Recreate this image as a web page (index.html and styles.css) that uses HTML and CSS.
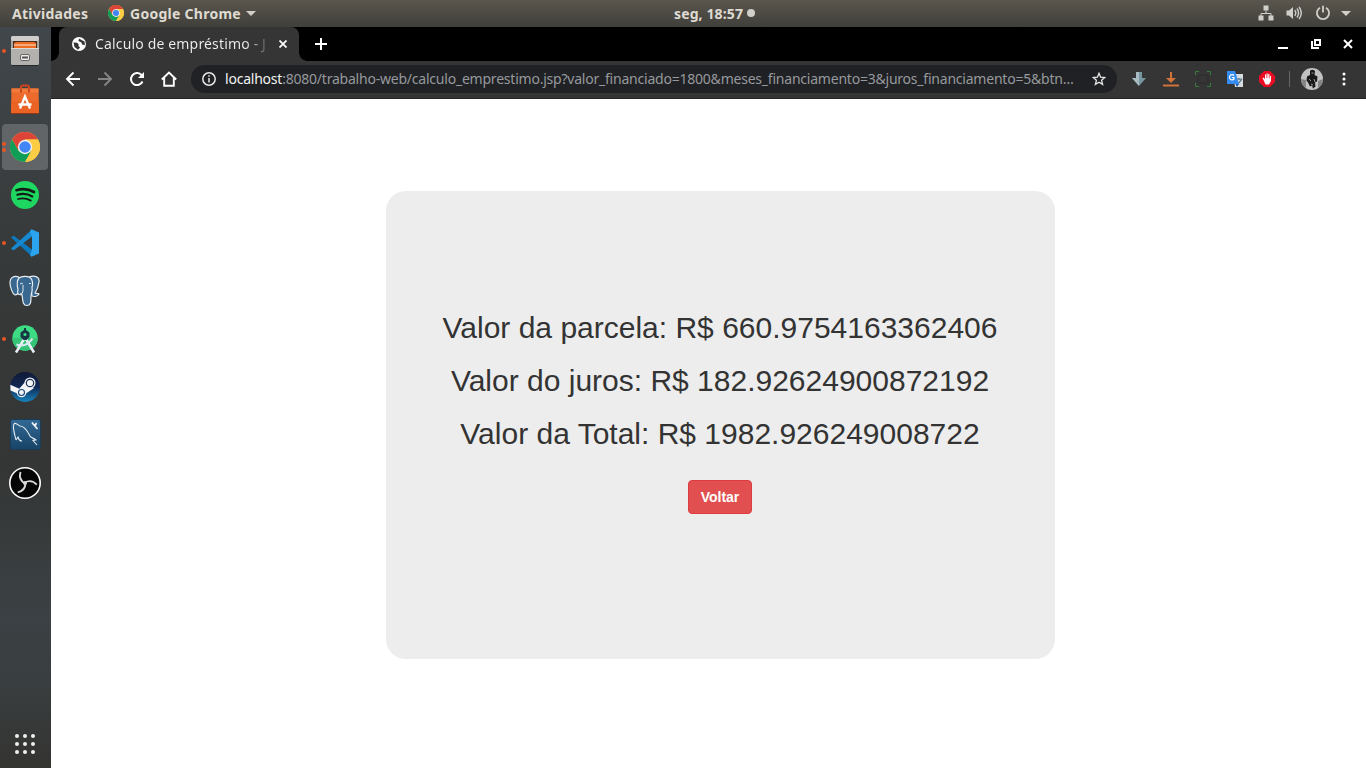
FILE: index.html
```html
<!DOCTYPE html>
<html lang="pt-BR">
<head>
<meta charset="utf-8">
<title>Calculo de empréstimo</title>
<link rel="stylesheet" href="styles.css">
</head>
<body>
<div class="desktop">
  <header class="topbar">
    <span class="activities">Atividades</span>
    <svg class="app-icon" width="16" height="16" viewBox="0 0 48 48"><use href="#chrome"/></svg>
    <span class="app-name">Google Chrome</span>
    <span class="caret"></span>
    <span class="clock"><span class="clock-text">seg, 18:57</span><i class="dot"></i></span>
    <div class="tray">
      <svg width="16" height="16" viewBox="0 0 16 16" fill="#d0cfca"><path d="M5.500 .5h5v5h-5zM.5 10.500h5v5h-5zM10.500 10.500h5v5h-5z"/><path d="M8 5.500v3M3 11V8.500h10V11" fill="none" stroke="#d0cfca"/></svg>
      <svg width="16" height="16" viewBox="0 0 16 16" fill="#d0cfca"><path d="M.5 5.500H3L7 2v12L3 10.500H.5z"/><path d="M8.800 5.200q2 2.800 0 5.600M11 3.500q3.200 4.500 0 9M13.100 2q4.400 6 0 12" fill="none" stroke="#d0cfca" stroke-width="1.400"/></svg>
      <svg width="16" height="16" viewBox="0 0 16 16" fill="none" stroke="#d0cfca" stroke-width="1.800"><path d="M5 2.700a6.100 6.100 0 1 0 6 0M8 .8v6.700"/></svg>
      <span class="caret"></span>
    </div>
  </header>
  <div class="workspace">
    <nav class="dock">
      <div class="cell"><i class="run"></i>
        <svg width="30" height="32" viewBox="0 0 30 32"><rect x="1" y="1" width="28" height="29" rx="2" fill="#a7a5a2"/><rect x="1" y="1" width="28" height="5" rx="2" fill="#d0cecb"/><rect x="3" y="6" width="24" height="8" fill="#4b2d20"/><path d="M4 8l2-1h18l2 1v6H4z" fill="#ee6b24"/><path d="M4 10h22" stroke="#fbe8cf"/><path d="M1 13h28v15q0 2-2 2H3q-2 0-2-2z" fill="#b3b1ae"/><path d="M1 13.500h28" stroke="#dedcda"/><rect x="10.500" y="19.500" width="9" height="6" rx="1.500" fill="#eee" stroke="#666"/><rect x="12" y="21.500" width="6" height="2" fill="#555"/><path d="M2 30.500h26" stroke="#252829"/></svg></div>
      <div class="cell">
        <svg width="30" height="32" viewBox="0 0 30 32"><path d="M11 7V4q0-1.500 2-1.500h4q2 0 2 1.500v3" fill="none" stroke="#cf4519" stroke-width="2"/><path d="M1.500 5.500h27L29 30H1z" fill="#ec6a2b"/><path d="M1.500 5.500h27v4h-27z" fill="#f2793a"/><path d="M1 18h28v12H1z" fill="#e95f22" opacity=".6"/><path d="M10 25.500L15 13.500l5 12M8.500 21.500h13" fill="none" stroke="#fff" stroke-width="2.300"/><path d="M11 5.500v4M19 5.500v4" stroke="#c4461a" stroke-width="2"/><path d="M1 30.500h28" stroke="#8f3713"/></svg></div>
      <div class="cell active"><i class="run two"></i>
        <svg width="30" height="30" viewBox="0 0 48 48">
          <g id="chrome"><circle cx="24" cy="24" r="24" fill="#fbcb43"/><path d="M3.200 12A24 24 0 0 1 44.800 12H24L13.600 30z" fill="#db4437"/><path d="M3.200 12A24 24 0 0 0 24 48L34.400 30 24 35 13.600 30z" fill="#0f9d58"/><path d="M24 12h20.800A24 24 0 0 1 24 48l10.400-18z" fill="#fdcc45"/><circle cx="24" cy="24" r="11.500" fill="#f1f1f1"/><circle cx="24" cy="24" r="9.200" fill="#4285f4"/></g></svg></div>
      <div class="cell">
        <svg width="28" height="28" viewBox="0 0 28 28"><circle cx="14" cy="14" r="14" fill="#1ed760"/><g fill="none" stroke="#151b17" stroke-linecap="round"><path d="M5.500 9.200q9.500-2.700 17.500 1.800" stroke-width="2.700"/><path d="M6.300 13.800q8.300-2.300 15 1.700" stroke-width="2.200"/><path d="M7 18q7-1.800 12.800 1.600" stroke-width="1.800"/></g></svg></div>
      <div class="cell"><i class="run"></i>
        <svg width="28" height="28" viewBox="0 0 28 28"><path d="M0 8.500l2.500-2L21 20.500v7z" fill="#0e79bd"/><path d="M0 19.500l2.500 2L21 7.500V.5z" fill="#1689d1"/><path d="M20.500.3L28 3.500v21l-7.500 3.200-1.500-1.500 2-5.500v-13L19 2z" fill="#2ba3ee"/></svg></div>
      <div class="cell">
        <svg width="32" height="32" viewBox="0 0 32 32"><g fill="#38678f" stroke="#e8edf0" stroke-width="1.200" stroke-linejoin="round"><path d="M10 2C5 .5 1 2 1 8c0 4 2.500 11 5 12 2 0 3-2 5-3z"/><path d="M20 2c6-2 11 0 10 5-.5 4-2 8-4 11 2 1 4 0 4 1-1 2-4 3-7 2z"/><path d="M10 3c3-2 8-2 11-.5 3 2 3 7 2 10 1 4-1 6-1 9 0 5 0 9-4 9-5 0-4-6-5-11-4 1-5-1-4-5-1-4-2-8 1-11.500z"/></g><path d="M11 9q2-1.500 3 0M20 8.500h2M14 10v6q0 3-3 3" fill="none" stroke="#dce5eb"/></svg></div>
      <div class="cell"><i class="run"></i>
        <svg width="28" height="30" viewBox="0 0 28 30"><circle cx="14" cy="14" r="12.700" fill="#3ddc84"/><path d="M1.300 14h25.400Q26 26 14 26.700 2 26 1.300 14z" fill="#35c476"/><path d="M12.800 15.500L5 28.500M15.200 15.500L23 28.500" stroke="#e7eef5" stroke-width="2.500"/><path d="M5.500 20.500Q15 24 21.500 14.500" fill="none" stroke="#dce8f2" stroke-width="2.200"/><path d="M9.500 8.500L13 6V4h2v2l3.500 2.500v4.500L15.500 16h-3l-3-3z" fill="#173747"/><circle cx="14" cy="10.500" r="1.600" fill="#3ddc84"/></svg></div>
      <div class="cell">
        <svg width="30" height="30" viewBox="0 0 30 30"><defs><linearGradient id="steam" x2="0" y2="1"><stop stop-color="#111936"/><stop offset=".5" stop-color="#112855"/><stop offset="1" stop-color="#1685bc"/></linearGradient></defs><circle cx="15" cy="15" r="15" fill="url(#steam)"/><path d="M.3 12.800l9 4 5.500-6.500 9 6-7.500 5q-1 4-4.500 4-4 0-5-4L.5 18.500z" fill="#f3f4f6"/><circle cx="20" cy="11" r="5.500" fill="#f3f4f6"/><circle cx="20" cy="11" r="3.700" fill="none" stroke="#1d3158" stroke-width="1.200"/><circle cx="11.500" cy="20.500" r="3" fill="none" stroke="#1a4779" stroke-width="1.100"/></svg></div>
      <div class="cell">
        <svg class="workbench" width="31" height="31" viewBox="0 0 31 31"><defs><linearGradient id="sea" x2="0" y2="1"><stop stop-color="#336995"/><stop offset="1" stop-color="#174367"/></linearGradient></defs><rect x=".5" y=".5" width="30" height="30" rx="2" fill="url(#sea)" stroke="#183b57"/><path d="M6 21C5 16 2 8 4 5c1-2 4 1 6 2 5 0 8 6 10 10 1 2 4 2 6 4l-3 .5 4 4.500M6 21l2-3q1 4 4 4" fill="none" stroke="#e5edf2" stroke-width="1.100"/><path d="M22 3.500l1.500 2 2 .5 1-2M23.500 5.500l4 4.500" fill="none" stroke="#edf3f6" stroke-width="1.700"/></svg></div>
      <div class="cell">
        <svg width="34" height="34" viewBox="0 0 34 34"><circle cx="17" cy="17" r="15.200" fill="#050505" stroke="#fff" stroke-width="1.600"/><g fill="none" stroke="#d9d9d9" stroke-width="1.900"><path d="M17 17.500C12.500 15 11 11 12.500 6"/><path d="M17 17.500C12.500 15 11 11 12.500 6" transform="rotate(120 17 17)"/><path d="M17 17.500C12.500 15 11 11 12.500 6" transform="rotate(240 17 17)"/></g><circle cx="17" cy="17" r="2" fill="#d9d9d9"/></svg></div>
      <div class="cell apps">
        <svg width="22" height="22" viewBox="0 0 22 22" fill="#efefed"><circle cx="3" cy="3" r="2"/><circle cx="11" cy="3" r="2"/><circle cx="19" cy="3" r="2"/><circle cx="3" cy="11" r="2"/><circle cx="11" cy="11" r="2"/><circle cx="19" cy="11" r="2"/><circle cx="3" cy="19" r="2"/><circle cx="11" cy="19" r="2"/><circle cx="19" cy="19" r="2"/></svg></div>
    </nav>
    <section class="browser">
      <div class="tabstrip">
        <div class="tab">
          <svg width="14" height="14" viewBox="0 0 14 14"><circle cx="7" cy="7" r="7" fill="#fff"/><path d="M1.500 5.500l3.500.2L6.500 7v2L8 10.500 6 12.700 2.500 10zM7 1.500L6.500 4l3 1.500.5 2 3 .5-.5-3.500L9.500 3z" fill="#333"/></svg>
          <span class="tab-title">Calculo de empréstimo - J</span>
          <svg class="tab-close" width="8" height="8" viewBox="0 0 8 8" stroke="#fff" stroke-width="1.700"><path d="M.5.5l7 7M7.500.5l-7 7"/></svg>
        </div>
        <svg class="new-tab" width="12" height="12" viewBox="0 0 12 12" stroke="#fff" stroke-width="2"><path d="M6 0v12M0 6h12"/></svg>
        <div class="window-buttons">
          <svg width="10" height="12" viewBox="0 0 10 12"><path d="M0 10h10" stroke="#fff" stroke-width="2"/></svg>
          <svg width="10" height="10" viewBox="0 0 10 10" fill="none" stroke="#fff"><path d="M4 1h5v5H4z" stroke-width="2"/><path d="M1 2v7h7" stroke-width="2"/></svg>
          <svg width="10" height="10" viewBox="0 0 10 10" stroke="#fff" stroke-width="2"><path d="M1 1l8 8M9 1L1 9"/></svg>
        </div>
      </div>
      <div class="toolbar">
        <div class="nav-buttons">
          <svg width="16" height="16" viewBox="0 0 16 16" fill="none" stroke="#fff" stroke-width="1.900"><path d="M15 8H2M8.500 1.500L2 8l6.500 6.500"/></svg>
          <svg width="16" height="16" viewBox="0 0 16 16" fill="none" stroke="#858585" stroke-width="1.900"><path d="M1 8h13M7.500 1.500L14 8l-6.500 6.500"/></svg>
          <svg width="16" height="16" viewBox="0 0 16 16"><path d="M13.500 10.500A6 6 0 1 1 12 3.600L14 5.600" fill="none" stroke="#fff" stroke-width="2"/><path d="M15 1v6H9z" fill="#fff"/></svg>
          <svg width="16" height="16" viewBox="0 0 16 16" fill="none" stroke="#fff" stroke-width="1.900"><path d="M.8 8.500L8 1.500l7.200 7M3.200 7v7.700h9.600V7"/></svg>
        </div>
        <div class="omnibox">
          <svg width="14" height="14" viewBox="0 0 14 14"><circle cx="7" cy="7" r="6.200" fill="none" stroke="#e6e6e6" stroke-width="1.500"/><path d="M7 6v4.500M7 3.300v1.500" stroke="#e6e6e6" stroke-width="1.500"/></svg>
          <span class="url"><b>localhost</b>:8080/trabalho-web/calculo_emprestimo.jsp?valor_financiado=1800&amp;meses_financiamento=3&amp;juros_financiamento=5&amp;btn…</span>
          <svg class="star" width="14" height="14" viewBox="0 0 14 14" fill="none" stroke="#e8e8e8" stroke-width="1.300"><path d="M7 1.300l1.600 3.900 4.200.3-3.200 2.800 1 4.100L7 10.200l-3.600 2.200 1-4.100L1.200 5.500l4.200-.3z"/></svg>
        </div>
        <div class="extensions">
          <svg width="16" height="16" viewBox="0 0 16 16"><path d="M5 1h6v6h4l-7 8-7-8h4z" fill="#7896a0"/><path d="M5 1h3v14L1 7h4z" fill="#a8bbc0"/></svg>
          <svg width="16" height="16" viewBox="0 0 16 16"><path d="M8 1v8M0 14.500h16" stroke="#d2733b" stroke-width="2"/><path d="M3 7h10l-5 5z" fill="#d2733b"/></svg>
          <svg width="16" height="16" viewBox="0 0 16 16" fill="none" stroke="#367d3b"><path d="M.5 4V.5H4M12 .5h3.500V4M15.500 12v3.500H12M4 15.500H.5V12"/><rect x="3" y="4" width="10" height="8" rx="1" stroke="#2d2d2d"/></svg>
          <svg width="16" height="16" viewBox="0 0 16 16"><path d="M6 3h10v13H8z" fill="#d6dcdf"/><path d="M10 14l5-6M9 8h6M12 7v2" stroke="#607d8b" stroke-width="1.200"/><path d="M0 0h8l4 13H0z" fill="#348cf0"/><path d="M8.500 13H12l-2 3z" fill="#1958b7"/><path d="M7 4.500A2.600 2.600 0 1 0 7 8V6.500H4.800" fill="none" stroke="#fff" stroke-width="1.200"/></svg>
          <svg width="16" height="16" viewBox="0 0 16 16"><path d="M5 0h6l5 5v6l-5 5H5l-5-5V5z" fill="#e90c22"/><path d="M4.500 9L3.500 7l1-.5L6 8V3.500h1V7h.5V2.500h1.200V7h.5V3h1.200v4.500h.5V5H12v5l-2 3.500H6.500z" fill="#fff"/></svg>
        </div>
        <span class="divider"></span>
        <svg class="avatar" width="22" height="22" viewBox="0 0 22 22"><circle cx="11" cy="11" r="11" fill="#c2c2c2"/><path d="M0 11l5 1v8Q0 17 0 11M17 13l5-2q0 6-5 9z" fill="#858585"/><path d="M9 3q2-2.500 5 0l-.5 4 3 1.500-.5 5-2 1 .5 4-2.500 2-1-3-2 1-2-4-1.500-2 .5-4 3-1.500z" fill="#191919"/><path d="M10.500 5h2M8 11l2 2m3-2l1 3M10 16l2 1" stroke="#999"/></svg>
        <svg class="menu" width="4" height="14" viewBox="0 0 4 14" fill="#fff"><circle cx="2" cy="2" r="1.500"/><circle cx="2" cy="7" r="1.500"/><circle cx="2" cy="12" r="1.500"/></svg>
      </div>
      <main class="page">
        <div class="card">
          <h2>Valor da parcela: R$ 660.9754163362406</h2>
          <h2>Valor do juros: R$ 182.92624900872192</h2>
          <h2>Valor da Total: R$ 1982.926249008722</h2>
          <button class="btn">Voltar</button>
        </div>
      </main>
    </section>
  </div>
</div>
</body>
</html>
```
FILE: styles.css
```css
* { box-sizing: border-box; }
body { margin: 0; overflow: hidden; font-family: "Noto Sans", sans-serif; }
svg { display: block; flex: none; }
.desktop { width: 1366px; height: 768px; display: flex; flex-direction: column; }

.topbar { position: relative; height: 27px; flex: none; display: flex; align-items: center; padding: 0 15px 1px 12px; background: linear-gradient(#5a564e, #403f3a); color: #dfdbd2; font-size: 14px; font-weight: 700; white-space: nowrap; }
.activities { width: 76px; letter-spacing: .27px; }
.app-icon { margin: 0 6px 0 20px; }
.app-name { width: 111px; letter-spacing: .27px; }
.caret { width: 0; height: 0; border: 5px solid transparent; border-top-color: #d0cfca; border-bottom: 0; margin-left: 5px; }
.clock { position: absolute; left: 674px; top: 0; height: 26px; display: flex; align-items: center; }
.clock-text { width: 69px; letter-spacing: .12px; }
.dot { width: 8px; height: 8px; border-radius: 50%; background: #d0cfca; margin-left: 4px; }
.tray { margin-left: auto; display: flex; align-items: center; gap: 12.500px; }
.tray .caret { margin-left: -2px; }

.workspace { flex: 1; min-height: 0; display: flex; }
.dock { width: 51px; flex: none; display: flex; flex-direction: column; gap: 2px; padding: 1px 3px 1px 2px; background: linear-gradient(#41474b 0, #3c4144 100px, #373a3a 220px, #343635 440px, #3b4144 590px, #393e40 650px, #343431 741px); }
.cell { position: relative; width: 46px; height: 46px; flex: none; display: flex; align-items: center; justify-content: center; border-radius: 4px; }
.active { background: #626567; }
.apps { margin-top: auto; }
.workbench { margin-bottom: 1px; }
.run { position: absolute; left: 0; top: 21px; width: 4px; height: 4px; border-radius: 50%; background: #e95420; }
.two { top: 18px; box-shadow: 0 6px #e95420; }

.browser { flex: 1; min-width: 0; display: flex; flex-direction: column; }
.tabstrip { height: 34px; flex: none; display: flex; align-items: center; background: #000; padding: 0 13px 0 8px; }
.tab { position: relative; width: 240px; height: 34px; display: flex; align-items: center; padding: 0 12px 0 13px; background: #353535; border-radius: 8px 8px 0 0; }
.tab::before, .tab::after { content: ""; position: absolute; bottom: 0; width: 8px; height: 8px; }
.tab::before { left: -8px; background: radial-gradient(circle at 0 0, transparent 7.500px, #353535 8px); }
.tab::after { right: -8px; background: radial-gradient(circle at 100% 0, transparent 7.500px, #353535 8px); }
.tab-title { width: 174px; margin-left: 9px; padding-bottom: 1px; overflow: hidden; white-space: nowrap; font-size: 14px; letter-spacing: .16px; background: linear-gradient(90deg, #f0f0f0 150px, #353535 177px); background-clip: text; color: transparent; }
.tab-close { margin-left: auto; }
.new-tab { margin-left: 16px; }
.window-buttons { margin-left: auto; display: flex; align-items: center; gap: 22.500px; }

.toolbar { height: 38px; flex: none; display: flex; align-items: center; padding: 0 20px 2px 14px; background: #353535; border-bottom: 1px solid #252525; }
.nav-buttons { display: flex; gap: 16px; }
.omnibox { width: 926px; height: 28px; margin-left: 14px; border-radius: 14px; background: #202124; display: flex; align-items: center; padding: 0 11px; }
.url { width: 850px; margin-left: 9px; color: #96999d; font-size: 14px; letter-spacing: -.22px; white-space: nowrap; }
.url b { font-weight: 400; color: #f1f1f1; }
.star { margin-left: auto; }
.extensions { display: flex; gap: 16px; margin-left: 14px; }
.divider { width: 1px; height: 16px; background: #676767; margin-left: 14px; }
.avatar { margin-left: 11px; }
.menu { margin-left: auto; }

.page { flex: 1; display: flex; justify-content: center; align-items: flex-start; padding: 92px 0 0 24px; background: #fff; }
.card { width: 669px; height: 468px; padding: 120px 1px 0 0; border-radius: 20px; background: #ededed; display: flex; flex-direction: column; align-items: center; font-family: "Liberation Sans", Arial, sans-serif; }
.card h2 { margin: 0 0 20px; font-size: 30px; line-height: 33px; font-weight: 400; color: #333; white-space: nowrap; }
.btn { width: 64px; height: 34px; margin-top: 10px; padding: 0; border: 1px solid #de3c3f; border-radius: 4px; background: #e14f50; color: #fff; font: 700 14px/20px "Liberation Sans", Arial, sans-serif; }
```
